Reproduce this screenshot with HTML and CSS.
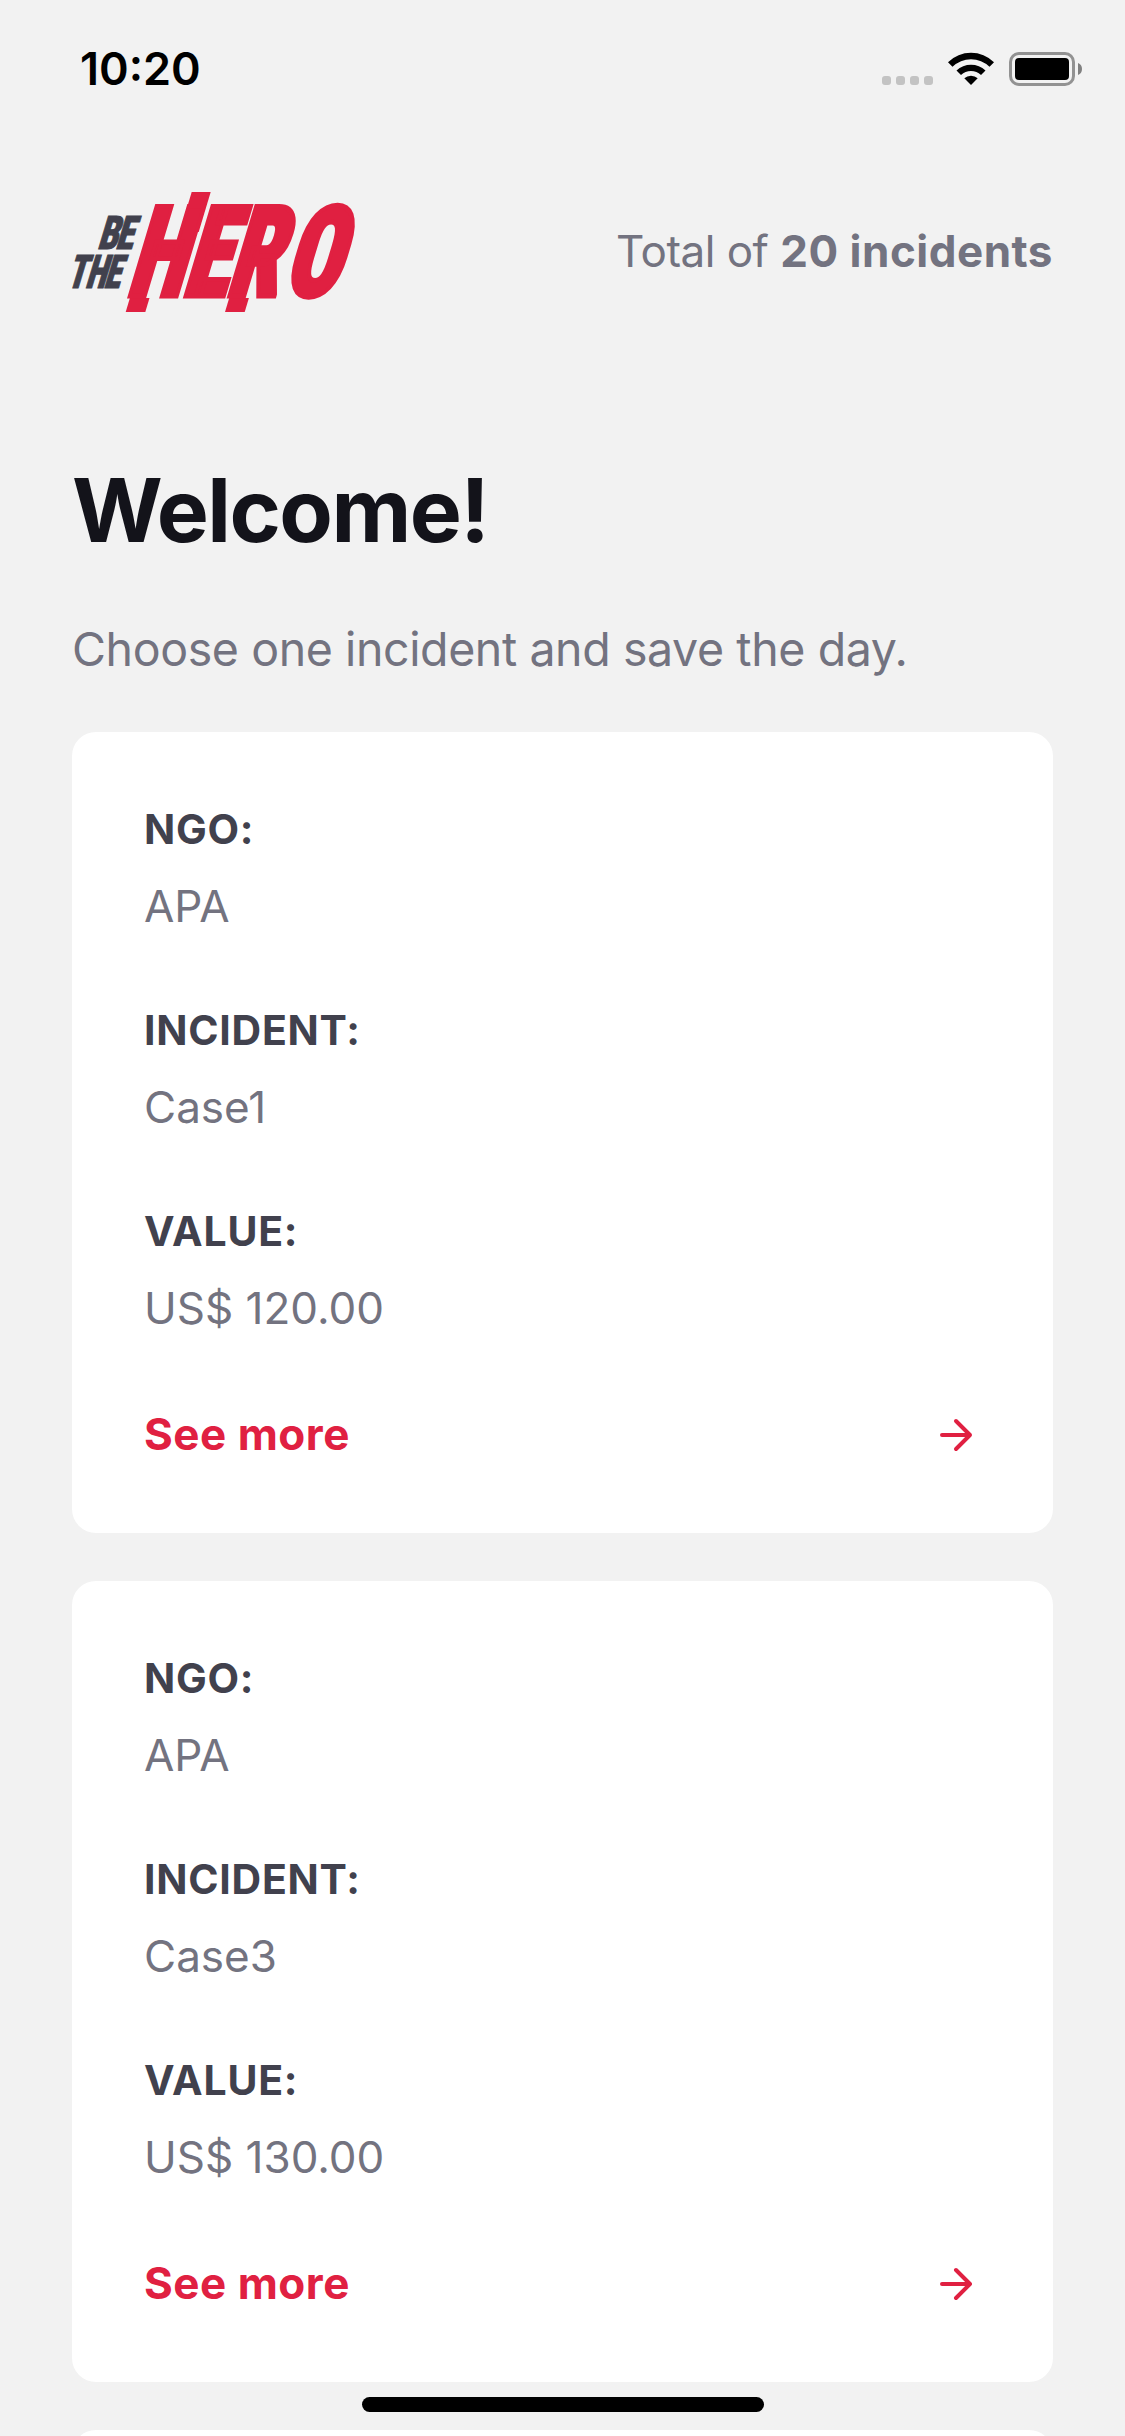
FILE: index.html
```html
<!DOCTYPE html>
<html lang="en">
<head>
<meta charset="utf-8">
<title>Be The Hero</title>
<link rel="stylesheet" href="styles.css">
</head>
<body>
<div class="screen">
  <div class="status">
    <span class="clock">10:20</span>
    <div class="indicators">
      <div class="signal"><i></i><i></i><i></i><i></i></div>
      <svg class="wifi" viewBox="0 0 46 33" width="46" height="33">
        <path d="M0 10.2A33 33 0 0 1 46 10.2L41.5 14.7A26.6 26.6 0 0 0 4.500 14.700Z"/>
        <path d="M8.500 18.500A21.200 21.200 0 0 1 37.500 18.500L33 23A14.800 14.800 0 0 0 13 23Z"/>
        <path d="M16.300 26.300A9.800 9.800 0 0 1 29.700 26.300L23 33Z"/>
      </svg>
      <svg class="battery" viewBox="0 0 73 34" width="73" height="34">
        <rect x="1.500" y="1.500" width="63" height="31" rx="8.500" fill="none" stroke="#929292" stroke-width="3"/>
        <rect x="6" y="6" width="54" height="22" rx="4"/>
        <path d="M69 11a6.500 6.500 0 0 1 0 12Z" fill="#808080"/>
      </svg>
    </div>
  </div>
  <header class="header">
    <svg class="logo" viewBox="0 0 285 120" width="285" height="120">
      <g class="logo-dark">
        <text transform="translate(24.800 56.500) skewX(-16.700) scale(.77 1)" x="0 23.400" y="0">BE</text>
        <text transform="translate(0 96.200) skewX(-16.700) scale(.72 1)" x="-8 17.400 43" y="0">THE</text>
      </g>
      <g class="logo-red">
        <polygon points="119.700,0 138.700,0 126.700,40 107.700,40"/>
        <polygon points="53.700,120 73.300,120 77.500,106 57.900,106"/>
        <polygon points="153,120 172.700,120 176.900,106 157.200,106"/>
        <text transform="translate(53.100 104.100) skewX(-16.700) scale(.735 1)" x="0 75.800 135.300 213" y="0">HERO</text>
      </g>
    </svg>
    <p class="total">Total of <strong>20 incidents</strong></p>
  </header>
  <h1 class="title">Welcome!</h1>
  <p class="description">Choose one incident and save the day.</p>
  <main class="incidents">
    <article class="card">
      <h2 class="label">NGO:</h2><p class="value">APA</p>
      <h2 class="label">INCIDENT:</h2><p class="value">Case1</p>
      <h2 class="label">VALUE:</h2><p class="value">US$ 120.00</p>
      <a class="more"><span>See more</span><svg viewBox="0 0 24 24" width="48" height="48"><path d="M5 12h14M12 5l7 7-7 7"/></svg></a>
    </article>
    <article class="card">
      <h2 class="label">NGO:</h2><p class="value">APA</p>
      <h2 class="label">INCIDENT:</h2><p class="value">Case3</p>
      <h2 class="label">VALUE:</h2><p class="value">US$ 130.00</p>
      <a class="more"><span>See more</span><svg viewBox="0 0 24 24" width="48" height="48"><path d="M5 12h14M12 5l7 7-7 7"/></svg></a>
    </article>
    <article class="card"></article>
  </main>
  <div class="home-indicator"></div>
</div>
</body>
</html>
```
FILE: styles.css
```css
* { box-sizing: border-box; margin: 0; padding: 0; }
body { background: #f2f2f2; font-family: Inter, "Liberation Sans", sans-serif; }
.screen { position: relative; width: 1125px; height: 2436px; overflow: hidden; padding: 0 72px; }

.status { display: flex; justify-content: space-between; height: 132px; margin: 0 -29px 0 8px; padding-top: 42px; }
.clock { font-size: 45px; line-height: 54px; font-weight: 600; }
.indicators { display: flex; align-items: flex-start; padding-top: 10px; }
.signal { display: flex; gap: 5px; margin: 24px 15px 0 0; }
.signal i { width: 9px; height: 9px; border-radius: 3px; background: #c3c3c3; }
.wifi { margin-right: 15px; }

.header { display: flex; justify-content: space-between; align-items: center; height: 120px; margin-top: 60px; }
.logo { overflow: visible; font-family: Roboto, sans-serif; font-weight: 900; font-stretch: 75%; }
.logo-dark { fill: #41414d; stroke: #41414d; stroke-width: 1px; font-size: 46.500px; }
.logo-red { fill: #e02041; font-size: 126px; }
.logo-red text { stroke: #e02041; stroke-width: 4.8px; }
.total { margin-bottom: 2px; font-size: 44px; line-height: 54px; color: #737380; letter-spacing: -.5px; }
.total strong { font-weight: 700; letter-spacing: .5px; }

.title { margin-top: 144px; font-size: 87.5px; line-height: 108px; font-weight: 700; color: #13131a; letter-spacing: -1.6px; }
.description { margin-top: 57px; font-size: 46.500px; line-height: 57px; color: #737380; letter-spacing: -.4px; }

.incidents { display: flex; flex-direction: column; gap: 48px; margin-top: 54px; }
.card { flex: none; height: 801px; padding: 72px; border-radius: 24px; background: #fff; }
.label { font-size: 41px; line-height: 51px; font-weight: 700; color: #41414d; letter-spacing: .75px; }
.value { margin: 24px 0 72px; font-size: 44px; line-height: 54px; color: #737380; }
.more { display: flex; justify-content: space-between; align-items: center; height: 54px; font-size: 44px; line-height: 54px; font-weight: 700; color: #e02041; letter-spacing: .5px; }
.more svg { margin: 2px 1px 0 0; fill: none; stroke: currentColor; stroke-width: 2; stroke-linecap: round; stroke-linejoin: round; }

.home-indicator { position: absolute; left: 362px; bottom: 24px; width: 402px; height: 15px; border-radius: 8px; background: #000; }
```
